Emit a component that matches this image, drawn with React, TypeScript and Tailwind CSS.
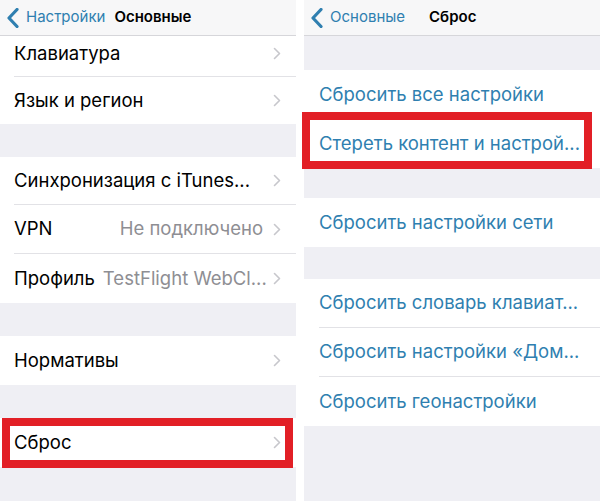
import React from 'react';

const font = { fontFamily: 'Inter, "Noto Sans", sans-serif' };

function Chevron() {
  return (
    <svg width="8" height="13" viewBox="0 0 8 13" className="shrink-0">
      <polyline points="1.5,1.5 6.5,6.5 1.5,11.5" fill="none" stroke="#c7c7cc" strokeWidth="1.6" strokeLinecap="round" strokeLinejoin="round" />
    </svg>
  );
}

function BackChevron() {
  return (
    <svg width="12" height="20" viewBox="0 0 12 20" className="shrink-0">
      <polyline points="10,1.5 2,10 10,18.5" fill="none" stroke="#2f7fb0" strokeWidth="3.2" strokeLinecap="round" strokeLinejoin="round" />
    </svg>
  );
}

function NavBar({ back, title, titleGap }: { back: string; title: string; titleGap: string }) {
  return (
    <div className="h-[36px] shrink-0 bg-[#f7f7f8] border-b border-[#d6d6da] flex items-center pl-[7px]">
      <BackChevron />
      <span className="ml-[7px] text-[15px] text-[#2f7fb0]">{back}</span>
      <span className={`${titleGap} text-[15px] font-semibold text-black`}>{title}</span>
    </div>
  );
}

function Row({
  label,
  value,
  h = 'h-[49px]',
  sep = false,
  highlight = false,
  pad = '',
}: {
  label: string;
  value?: string;
  h?: string;
  sep?: boolean;
  highlight?: boolean;
  pad?: string;
}) {
  return (
    <div className={`relative ${h} shrink-0 bg-white pl-[14px]`}>
      <div className={`h-full flex items-center pr-[15px] ${pad} ${sep ? 'border-b border-[#e2e2e6]' : ''}`}>
        <span className="text-[18.5px] text-black whitespace-nowrap">{label}</span>
        <span className="flex-1 text-right text-[18.5px] text-[#8e8e93] whitespace-nowrap overflow-hidden pl-[8px] pr-[10px]">
          {value}
        </span>
        <Chevron />
      </div>
      {highlight && (
        <div className="absolute left-[2px] right-[3px] top-0 bottom-[-1px] border-[8px] border-[#e21f26]" />
      )}
    </div>
  );
}

function ActionRow({
  label,
  h = 'h-[49px]',
  sep = false,
  highlight = false,
}: {
  label: string;
  h?: string;
  sep?: boolean;
  highlight?: boolean;
}) {
  return (
    <div className={`relative ${h} shrink-0 bg-white pl-[15px]`}>
      <div className={`h-full flex items-center ${sep ? 'border-b border-[#e2e2e6]' : ''}`}>
        <span className="text-[18.5px] text-[#2f7fb0] whitespace-nowrap">{label}</span>
      </div>
      {highlight && (
        <div className="absolute left-[-2px] right-[8px] top-[-7px] bottom-[-1px] border-[8px] border-[#e21f26]" />
      )}
    </div>
  );
}

const Gap = ({ h }: { h: string }) => <div className={`${h} shrink-0`} />;

export default function App() {
  return (
    <div className="w-[600px] h-[501px] flex bg-white overflow-hidden" style={font}>
      <div className="w-[296px] h-full flex flex-col bg-[#efeff4]">
        <NavBar back="Настройки" title="Основные" titleGap="ml-[9px]" />
        <Row label="Клавиатура" h="h-[41px]" pad="pb-[5px]" sep />
        <Row label="Язык и регион" h="h-[47px]" />
        <Gap h="h-[33px]" />
        <Row label="Синхронизация с iTunes..." h="h-[48px]" sep />
        <Row label="VPN" value="Не подключено" sep />
        <Row label="Профиль" value="TestFlight WebCl..." />
        <Gap h="h-[33px]" />
        <Row label="Нормативы" />
        <Gap h="h-[33px]" />
        <Row label="Сброс" highlight />
      </div>
      <div className="w-[8px] h-full" />
      <div className="w-[296px] h-full flex flex-col bg-[#efeff4]">
        <NavBar back="Основные" title="Сброс" titleGap="ml-[24px]" />
        <Gap h="h-[34px]" />
        <ActionRow label="Сбросить все настройки" />
        <ActionRow label="Стереть контент и настрой..." highlight />
        <Gap h="h-[30px]" />
        <ActionRow label="Сбросить настройки сети" />
        <Gap h="h-[32px]" />
        <ActionRow label="Сбросить словарь клавиат..." sep />
        <ActionRow label="Сбросить настройки «Дом..." sep />
        <ActionRow label="Сбросить геонастройки" />
      </div>
    </div>
  );
}
